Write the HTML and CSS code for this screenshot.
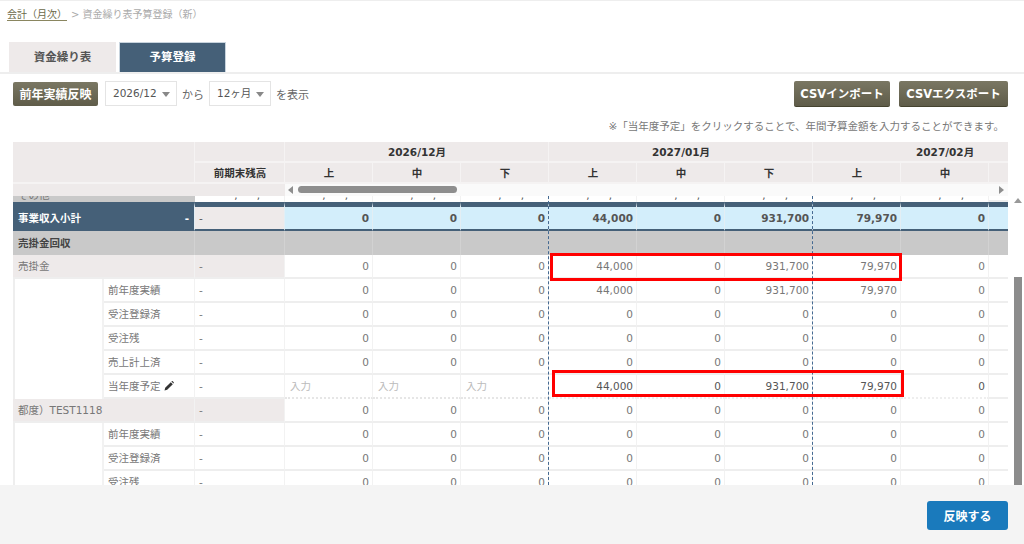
FILE: index.html
```html
<!DOCTYPE html>
<html lang="ja">
<head>
  <meta charset="UTF-8">
  <title>資金繰り表予算登録</title>
  <link rel="stylesheet" href="styles.css">
</head>
<body>
  <div class="crumb"><a href="#">会計（月次）</a><span class="sep">&gt;</span><span>資金繰り表予算登録（新）</span></div>

  <div class="tabs">
    <div class="tab">資金繰り表</div>
    <div class="tab active">予算登録</div>
  </div>

  <div class="toolbar">
    <button class="btn">前年実績反映</button>
    <div class="select s-month">2026/12<i></i></div>
    <span>から</span>
    <div class="select s-span">12ヶ月<i></i></div>
    <span>を表示</span>
    <div class="toolbar-right">
      <button class="btn btn-csv">CSVインポート</button>
      <button class="btn btn-csv">CSVエクスポート</button>
    </div>
  </div>

  <p class="note">※「当年度予定」をクリックすることで、年間予算金額を入力することができます。</p>

  <div class="sheet">
    <div class="grid-wrap">
      <table class="grid grid-head">
        <colgroup><col class="c-a"><col class="c-a"><col class="c-b"><col span="9" class="c-v"></colgroup>
        <tr class="h-row">
          <th colspan="2" rowspan="2"></th><th></th>
          <th colspan="3">2026/12月</th><th colspan="3">2027/01月</th><th colspan="3">2027/02月</th>
        </tr>
        <tr class="h-row">
          <th>前期末残高</th>
          <th>上</th><th>中</th><th>下</th><th>上</th><th>中</th><th>下</th><th>上</th><th>中</th><th></th>
        </tr>
      </table>
      <div class="hscroll">
        <div class="hscroll-left"></div>
        <div class="hscroll-track">
          <i class="arrow-l"></i><div class="hthumb"></div><i class="arrow-r"></i>
        </div>
      </div>
      <div class="grid-body">
        <table class="grid">
          <colgroup><col class="c-a"><col class="c-a"><col class="c-b"><col span="9" class="c-v"></colgroup>
          <tr class="r-other"><td colspan="2" class="l-group">その他</td><td class="tk"><b>,</b><b>,</b></td><td class="tk"><b>,</b><b>,</b></td><td class="tk"><b>,</b><b>,</b></td><td class="tk"><b>,</b><b>,</b></td><td class="tk"><b>,</b><b>,</b></td><td class="tk"><b>,</b><b>,</b></td><td class="tk"><b>,</b><b>,</b></td><td class="tk"><b>,</b><b>,</b></td><td class="tk"><b>,</b><b>,</b></td><td></td></tr>
          <tr class="r-total"><td colspan="2" class="l-total">事業収入小計<span>-</span></td><td class="pre">-</td><td>0</td><td>0</td><td>0</td><td>44,000</td><td>0</td><td>931,700</td><td>79,970</td><td>0</td><td></td></tr>
          <tr class="r-group"><td colspan="2">売掛金回収</td><td></td><td></td><td></td><td></td><td></td><td></td><td></td><td></td><td></td><td></td></tr>
          <tr><td colspan="2" class="l-parent">売掛金</td><td class="pre shade">-</td><td>0</td><td>0</td><td>0</td><td>44,000</td><td>0</td><td>931,700</td><td>79,970</td><td>0</td><td></td></tr>
          <tr><td class="l-indent"></td><td class="l-child">前年度実績</td><td class="pre">-</td><td>0</td><td>0</td><td>0</td><td>44,000</td><td>0</td><td>931,700</td><td>79,970</td><td>0</td><td></td></tr>
          <tr><td class="l-indent"></td><td class="l-child">受注登録済</td><td class="pre">-</td><td>0</td><td>0</td><td>0</td><td>0</td><td>0</td><td>0</td><td>0</td><td>0</td><td></td></tr>
          <tr><td class="l-indent"></td><td class="l-child">受注残</td><td class="pre">-</td><td>0</td><td>0</td><td>0</td><td>0</td><td>0</td><td>0</td><td>0</td><td>0</td><td></td></tr>
          <tr><td class="l-indent"></td><td class="l-child">売上計上済</td><td class="pre">-</td><td>0</td><td>0</td><td>0</td><td>0</td><td>0</td><td>0</td><td>0</td><td>0</td><td></td></tr>
          <tr class="r-plan"><td class="l-indent"></td><td class="l-child">当年度予定<svg class="pencil" viewBox="0 0 10 10"><path d="M0.5 9.5 L1.2 6.8 L6.8 1.2 L8.8 3.2 L3.2 8.8 Z M7.4 0.6 L8 0.1 Q8.4 -0.1 8.8 0.3 L9.7 1.2 Q10 1.6 9.8 2 L9.4 2.6 Z"/></svg></td><td class="pre">-</td><td class="input">入力</td><td class="input">入力</td><td class="input">入力</td><td class="dark">44,000</td><td class="dark">0</td><td class="dark">931,700</td><td class="dark">79,970</td><td class="dark">0</td><td></td></tr>
          <tr><td colspan="2" class="l-parent">都度）TEST1118</td><td class="pre shade">-</td><td>0</td><td>0</td><td>0</td><td>0</td><td>0</td><td>0</td><td>0</td><td>0</td><td></td></tr>
          <tr><td class="l-indent"></td><td class="l-child">前年度実績</td><td class="pre">-</td><td>0</td><td>0</td><td>0</td><td>0</td><td>0</td><td>0</td><td>0</td><td>0</td><td></td></tr>
          <tr><td class="l-indent"></td><td class="l-child">受注登録済</td><td class="pre">-</td><td>0</td><td>0</td><td>0</td><td>0</td><td>0</td><td>0</td><td>0</td><td>0</td><td></td></tr>
          <tr><td class="l-indent"></td><td class="l-child">受注残</td><td class="pre">-</td><td>0</td><td>0</td><td>0</td><td>0</td><td>0</td><td>0</td><td>0</td><td>0</td><td></td></tr>
        </table>
      </div>
      <!-- 月の区切り線 -->
      <div class="month-line m1"></div>
      <div class="month-line m2"></div>
      <!-- 赤枠 -->
      <div class="mark mark-a"></div>
      <div class="mark mark-b"></div>
    </div>
    <div class="vscroll"><i class="arrow-u"></i><div class="vthumb"></div></div>
  </div>

  <div class="footer"><button class="btn-apply">反映する</button></div>
</body>
</html>
```
FILE: styles.css
```css
* { box-sizing: border-box; }
html, body { margin: 0; height: 544px; overflow: hidden; }
body { display: flex; flex-direction: column; background: #fff; color: #666; font-family: "DejaVu Sans", "Noto Sans CJK JP", sans-serif; font-size: 11px; border-top: 1px solid #eee; }
button { font-family: inherit; cursor: pointer; }

.crumb { height: 41px; padding: 7px 0 0 7px; font-size: 10px; line-height: 14px; color: #aaa; }
.crumb a { color: #6b6848; text-decoration: none; border-bottom: 1px solid #8a8660; }
.crumb .sep { margin: 0 3px 0 4px; }

.tabs { display: flex; gap: 3px; height: 32px; padding-left: 9px; border-bottom: 2px solid #eee; }
.tab { width: 107px; height: 30px; line-height: 30px; text-align: center; font-size: 11.5px; font-weight: bold; background: #eeeaea; color: #555; }
.tab.active { background: #456078; color: #fff; border: 1px solid #c8d4de; border-bottom: 0; line-height: 28px; }

.toolbar { display: flex; align-items: center; margin-top: 7px; height: 25px; padding: 0 16px 0 13px; font-size: 11px; }
.btn { height: 24px; padding: 0; border: 0; border-radius: 2px; background: linear-gradient(#7a7763, #5f5c49); color: #fff; font-size: 12px; font-weight: bold; width: 85px; }
.select { position: relative; height: 25px; line-height: 23px; margin: 0 5px 0 7px; padding-left: 7px; border: 1px solid #e4e4e4; background: #fff; color: #555; font-size: 10.5px; }
.select i { position: absolute; right: 6px; top: 10px; border: 4px solid transparent; border-top: 5px solid #888; border-bottom: 0; }
.s-month { width: 72px; }
.s-span { width: 62px; margin-left: 5px; }
.toolbar-right { margin-left: auto; display: flex; gap: 9px; }
.btn-csv { height: 26px; border-bottom: 1px solid #45432f; font-size: 11.5px; width: 96px; }
.btn-csv + .btn-csv { width: 109px; }

.note { margin: 0; height: 36px; padding: 13px 20px 0 0; text-align: right; font-size: 10.5px; line-height: 14px; color: #777; }

.sheet { flex: 1; min-height: 0; display: flex; padding-left: 13px; }
.grid-wrap { position: relative; width: 995px; height: 100%; overflow: hidden; }

.grid { width: 1064px; table-layout: fixed; border-collapse: separate; border-spacing: 0; }
.c-a { width: 91px; }
.c-b { width: 90px; }
.c-v { width: 88px; }
.grid-head th { height: 21px; padding: 0 0 0 1px; background: #eeeaea; border: 1px solid #f5f3f3; border-width: 0 1px 2px 0; color: #333; font-size: 10.5px; font-weight: bold; text-align: center; }

.hscroll { display: flex; height: 12px; }
.hscroll-left { width: 272px; background: #eeeaea; }
.hscroll-track { position: relative; flex: 1; background: #fafafa; }
.hthumb { position: absolute; left: 13px; top: 2px; width: 159px; height: 7px; border-radius: 4px; background: #8e8e8e; }
.arrow-l { position: absolute; left: 3px; top: 2px; border: 4px solid transparent; border-right: 5px solid #8e8e8e; border-left: 0; }
.arrow-r { position: absolute; right: 4px; top: 2px; border: 4px solid transparent; border-left: 5px solid #8e8e8e; border-right: 0; }

.grid-body { height: 289px; overflow: hidden; }
.grid-body .grid { margin-top: -18px; }
.grid-body tr { height: 24px; }
.grid-body td { padding: 0 3px 0 0; border-right: 1px solid #f2f2f2; border-bottom: 2px solid #eee; text-align: right; color: #777; font-size: 10.5px; line-height: 14px; overflow: hidden; white-space: nowrap; }

.l-group, .l-parent, .l-total, .l-child, .grid-body td.pre, .r-group td { text-align: left; }
.grid-body td.l-group { background: #c9c9c9; border: 0; padding-left: 5px; text-align: left; vertical-align: bottom; }
.grid-body td.tk { vertical-align: bottom; padding-right: 24px; color: #555; border-bottom: 0; }
.tk b { font-weight: normal; margin-left: 19px; }

.grid-body .r-total td { height: 29px; border-top: 5px solid #456078; border-bottom: 2px solid #456078; border-right: 1px solid #e3eef4; background: #d3eefb; font-weight: bold; color: #555; }
.grid-body td.pre { background: #fff; padding-left: 4px; text-align: left; }
.grid-body .r-total td.pre, .grid-body td.pre.shade { background: #eeeaea; font-weight: normal; }
.grid-body .r-total td.l-total { background: #456078; color: #fff; padding: 0 5px; text-align: left; font-weight: bold; }
.l-total span { float: right; }
.grid-body .r-group td { background: #c9c9c9; border-bottom: 0; border-right: 1px solid #d2d2d2; font-weight: bold; color: #444; padding-left: 5px; text-align: left; }
.grid-body td.l-parent { background: #eeeaea; padding-left: 5px; text-align: left; }
.grid-body td.l-child { padding-left: 4px; text-align: left; }
.grid-body td.l-indent { border-bottom: 0; border-right: 2px solid #f2f2f2; border-left: 2px solid #eee; }
.grid-body td.input { text-align: left; color: #bbb; padding-left: 5px; border-bottom: 2px dotted #e6e6e6; }
.grid-body td.dark { color: #555; border-bottom: 2px dotted #eee; }
.pencil { width: 10px; height: 10px; margin-left: 3px; vertical-align: -1px; fill: #333; }

.month-line { position: absolute; top: 54px; bottom: 0; border-left: 1px dashed #456a92; }
.m1 { left: 535px; }
.m2 { left: 799px; }
.mark { position: absolute; border: 3px solid #f00; }
.mark-a { left: 537px; top: 111px; width: 352px; height: 28px; }
.mark-b { left: 539px; top: 228px; width: 352px; height: 27px; }

.vscroll { position: relative; flex: 1; }
.vthumb { position: absolute; left: 6px; width: 8px; top: 135px; bottom: 0; background: #8c8c8c; }
.arrow-u { position: absolute; left: 6px; top: 56px; border: 4px solid transparent; border-bottom: 5px solid #999; border-top: 0; }

.footer { height: 59px; padding: 16px 16px 0 0; display: flex; justify-content: flex-end; align-items: flex-start; background: #f4f4f4; }
.btn-apply { width: 81px; height: 29px; border: 0; border-radius: 3px; background: #1a7abc; color: #fff; font-size: 12px; font-weight: bold; }
```
